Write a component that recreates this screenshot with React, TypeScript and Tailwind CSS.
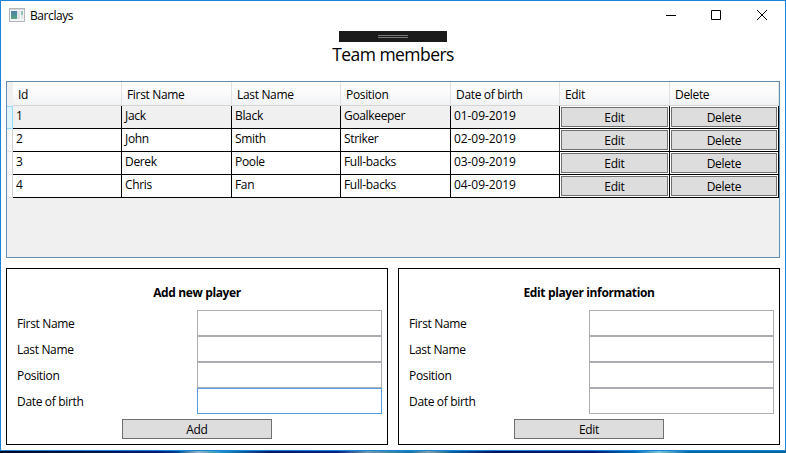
import React from "react";

const columns = [
  { name: "Id", width: "w-[109px]" },
  { name: "First Name", width: "w-[110px]" },
  { name: "Last Name", width: "w-[109px]" },
  { name: "Position", width: "w-[110px]" },
  { name: "Date of birth", width: "w-[109px]" },
  { name: "Edit", width: "w-[110px]" },
  { name: "Delete", width: "w-[109px]" },
];

const players = [
  ["1", "Jack", "Black", "Goalkeeper", "01-09-2019"],
  ["2", "John", "Smith", "Striker", "02-09-2019"],
  ["3", "Derek", "Poole", "Full-backs", "03-09-2019"],
  ["4", "Chris", "Fan", "Full-backs", "04-09-2019"],
];

const fields = ["First Name", "Last Name", "Position", "Date of birth"];

function TitleBar() {
  return (
    <header className="flex h-[30px] shrink-0 items-center pl-2">
      <svg className="mb-[2px]" width="16" height="14" viewBox="0 0 16 14" shapeRendering="crispEdges">
        <defs>
          <linearGradient id="pane" x1="0" y1="0" x2="0" y2="1">
            <stop offset="0" stopColor="#4c7fae" />
            <stop offset="1" stopColor="#58a57c" />
          </linearGradient>
        </defs>
        <rect x="0.5" y="0.5" width="15" height="13" fill="#f4f4f5" stroke="#b3b6ba" />
        <rect x="1" y="1" width="14" height="1" fill="#d5d7da" />
        <rect x="2" y="3" width="6" height="8" fill="url(#pane)" />
        <rect x="8" y="3" width="3" height="8" fill="#dfe3e5" />
        <rect x="12" y="3" width="2" height="4" fill="#8fc3b4" />
        <rect x="12" y="7" width="2" height="4" fill="#e3e6e8" />
      </svg>
      <span className="ml-[5px] text-[12px] leading-4 tracking-[-0.42px]">Barclays</span>
      <svg className="mr-[18px] mb-[2px] ml-auto" width="101" height="10" viewBox="0 0 101 10" fill="none" stroke="#000">
        <path d="M0 5.5h10" />
        <path d="M45.5.5h9v9h-9z" />
        <path d="M91 0l10 10M101 0L91 10" />
      </svg>
    </header>
  );
}

function RowHeader({ selected }: { selected: boolean }) {
  return (
    <div
      className={
        selected
          ? "w-[6px] border border-l-0 border-[#98d8f8] bg-[#dff3fc]"
          : "w-[6px] border-r border-b border-r-[#d0d0d0] border-b-[#e4e4e4] bg-linear-to-r from-[#f2f2f3] to-white"
      }
    />
  );
}

function CellButton({ label }: { label: string }) {
  return (
    <button className="m-px flex flex-1 items-center justify-center border border-[#707070] bg-[#ddd] tracking-[-0.25px]">
      <span className="pt-[2px] leading-4">{label}</span>
    </button>
  );
}

function TeamGrid() {
  return (
    <section className="mx-[5px] flex h-[177px] shrink-0 flex-col border border-[#688caf] bg-[#f0f0f0]">
      <div className="flex h-6">
        <div className="w-[6px]" />
        {columns.map((c) => (
          <div
            key={c.name}
            className={`${c.width} flex border-b border-[#d5d5d5] bg-linear-to-b from-white via-[#fbfbfc] to-[#f0f2f5]`}
          >
            <span className="flex-1 pt-[5px] pl-[5px] leading-4 whitespace-nowrap">{c.name}</span>
            <div className="w-px bg-[#e0e1e3]" />
          </div>
        ))}
      </div>
      {players.map((p, row) => (
        <div key={p[0]} className="flex h-[23px]">
          <RowHeader selected={row === 0} />
          {p.map((value, i) => (
            <div
              key={i}
              className={`${columns[i].width} border-r border-b border-black pt-[2px] pl-[3px] leading-4 ${row === 0 ? "bg-[#f0f0f0]" : "bg-white"} ${i === 4 ? "tracking-[-0.08px]" : ""}`}
            >
              {value}
            </div>
          ))}
          <div className="flex w-[110px] border-r border-b border-black bg-white">
            <CellButton label="Edit" />
          </div>
          <div className="flex w-[109px] border-r border-b border-black bg-white">
            <CellButton label="Delete" />
          </div>
        </div>
      ))}
    </section>
  );
}

function PlayerForm({ title, action, focused }: { title: string; action: string; focused?: number }) {
  return (
    <section className="flex h-[177px] w-[382px] flex-col border border-black">
      <h2 className="mt-4 h-[25px] text-center leading-4 font-bold tracking-[-0.37px]">{title}</h2>
      {fields.map((f, i) => (
        <label key={f} className="flex h-[26px] items-center justify-between pr-[5px] pl-[10px]">
          <span className="pt-[2px] leading-4">{f}</span>
          <input
            className={`h-[26px] w-[185px] border bg-white outline-none ${i === focused ? "border-[#569de5]" : "border-[#abadb3]"}`}
          />
        </label>
      ))}
      <button className="mt-[5px] ml-[115px] flex h-5 w-[150px] items-center justify-center border border-[#707070] bg-[#ddd]">
        <span className="pt-[2px] leading-4">{action}</span>
      </button>
    </section>
  );
}

export default function App() {
  return (
    <div className="flex h-[453px] w-[786px] flex-col overflow-hidden bg-white font-['Open_Sans','Noto_Sans',sans-serif] text-[12px] tracking-[-0.33px] text-black">
      <main className="flex h-[451px] shrink-0 flex-col border border-[#1883d7]">
        <TitleBar />
        <div className="ml-[338px] flex h-[11px] w-[108px] shrink-0 flex-col items-center gap-px bg-[#1b1b1c] pt-1">
          <div className="h-px w-[30px] bg-[#777]" />
          <div className="h-px w-[30px] bg-[#777]" />
        </div>
        <h1 className="h-[39px] shrink-0 text-center text-[17.5px] leading-[25px] tracking-[-0.55px]">Team members</h1>
        <TeamGrid />
        <div className="mx-[5px] mt-[10px] flex justify-between">
          <PlayerForm title="Add new player" action="Add" focused={3} />
          <PlayerForm title="Edit player information" action="Edit" />
        </div>
      </main>
      <div className="h-[2px] bg-linear-to-r from-[#020824] from-0% via-[#001a6b] via-20% to-[#0c6ba6] to-25%">
        <div className="ml-[180px] h-full bg-[linear-gradient(90deg,#0a5c9a_0%,#8fb6c9_3%,#1c8fc0_7%,#00185f_15%,#02267c_26%,#6899b4_31%,#1673a3_38%,#7d9fae_41%,#0b5f9b_45%,#001355_52%,#001c6c_68%,#006cb0_75%,#7fc0dd_79%,#006b9f_84%,#00669a_100%)]" />
      </div>
    </div>
  );
}
